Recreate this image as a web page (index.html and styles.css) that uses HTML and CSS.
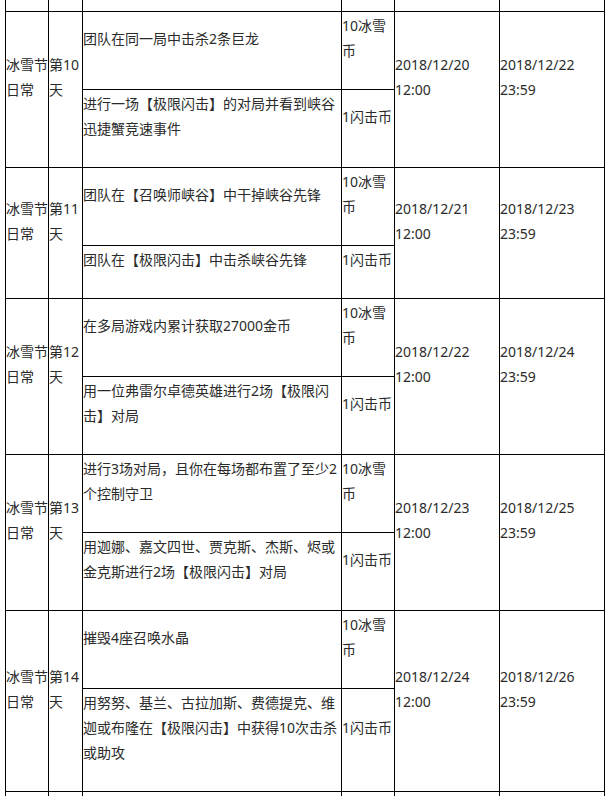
FILE: index.html
```html
<!DOCTYPE html>
<html lang="zh-CN">
<head>
<meta charset="utf-8">
<title>冰雪节日常</title>
<link rel="stylesheet" href="styles.css">
</head>
<body>
<table class="tasks">
  <colgroup>
    <col class="c-type"><col class="c-day"><col class="c-task"><col class="c-reward"><col class="c-date"><col class="c-date">
  </colgroup>
  <tbody>
    <tr class="stub-top"><td></td><td></td><td></td><td></td><td></td><td></td></tr>

    <tr>
      <td rowspan="2">冰雪节日常</td><td rowspan="2">第10天</td>
      <td>团队在同一局中击杀2条巨龙</td><td>10冰雪币</td>
      <td rowspan="2">2018/12/20 12:00</td><td rowspan="2">2018/12/22 23:59</td>
    </tr>
    <tr><td>进行一场【极限闪击】的对局并看到峡谷迅捷蟹竞速事件</td><td>1闪击币</td></tr>

    <tr>
      <td rowspan="2">冰雪节日常</td><td rowspan="2">第11天</td>
      <td>团队在【召唤师峡谷】中干掉峡谷先锋</td><td>10冰雪币</td>
      <td rowspan="2">2018/12/21 12:00</td><td rowspan="2">2018/12/23 23:59</td>
    </tr>
    <tr><td>团队在【极限闪击】中击杀峡谷先锋</td><td>1闪击币</td></tr>

    <tr>
      <td rowspan="2">冰雪节日常</td><td rowspan="2">第12天</td>
      <td>在多局游戏内累计获取27000金币</td><td>10冰雪币</td>
      <td rowspan="2">2018/12/22 12:00</td><td rowspan="2">2018/12/24 23:59</td>
    </tr>
    <tr><td>用一位弗雷尔卓德英雄进行2场【极限闪击】对局</td><td>1闪击币</td></tr>

    <tr>
      <td rowspan="2">冰雪节日常</td><td rowspan="2">第13天</td>
      <td>进行3场对局，且你在每场都布置了至少2个控制守卫</td><td>10冰雪币</td>
      <td rowspan="2">2018/12/23 12:00</td><td rowspan="2">2018/12/25 23:59</td>
    </tr>
    <tr><td>用迦娜、嘉文四世、贾克斯、杰斯、烬或金克斯进行2场【极限闪击】对局</td><td>1闪击币</td></tr>

    <tr>
      <td rowspan="2">冰雪节日常</td><td rowspan="2">第14天</td>
      <td>摧毁4座召唤水晶</td><td>10冰雪币</td>
      <td rowspan="2">2018/12/24 12:00</td><td rowspan="2">2018/12/26 23:59</td>
    </tr>
    <tr><td>用努努、基兰、古拉加斯、费德提克、维迦或布隆在【极限闪击】中获得10次击杀或助攻</td><td>1闪击币</td></tr>

    <tr class="stub-bottom"><td></td><td></td><td></td><td></td><td></td><td></td></tr>
  </tbody>
</table>
</body>
</html>
```

FILE: styles.css
```css
html, body {
  margin: 0;
  padding: 0;
  background: #fff;
}

body {
  overflow: hidden;
}

.tasks {
  margin-left: 5px;
  border-collapse: collapse;
  table-layout: fixed;
  width: 600px;
  font-family: "Noto Sans", "Noto Sans CJK SC", sans-serif;
  font-size: 14px;
  line-height: 25px;
  color: #2b2b2b;
}

.c-type { width: 43px; }
.c-day { width: 34px; }
.c-task { width: 259px; }
.c-reward { width: 53px; }
.c-date { width: 105px; }

.tasks td {
  border: 1px solid #000;
  padding: 1px 0 26px 0;
  vertical-align: middle;
  word-break: normal;
  overflow-wrap: break-word;
}

.tasks .stub-top td {
  border-top: none;
  padding: 0;
  height: 11px;
}

.tasks .stub-bottom td {
  padding: 0;
  height: 40px;
}
```
